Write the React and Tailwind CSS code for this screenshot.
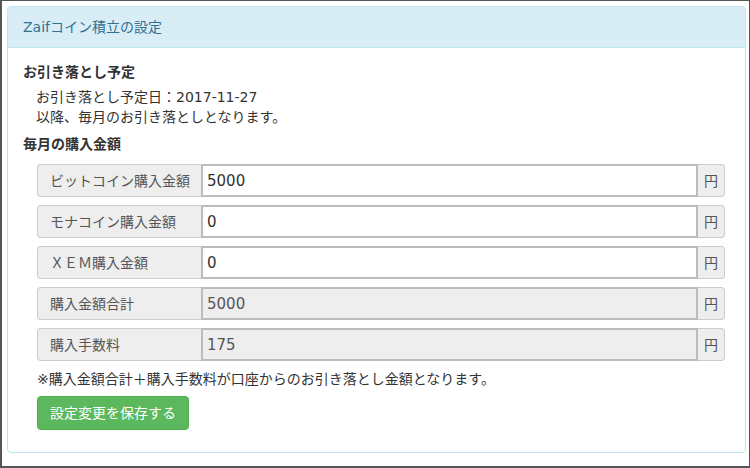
import React from "react";

const font = { fontFamily: '"DejaVu Sans", "Noto Sans CJK JP", sans-serif' };

const rows = [
  { label: "ビットコイン購入金額", value: "5000", readOnly: false },
  { label: "モナコイン購入金額", value: "0", readOnly: false },
  { label: "ＸＥＭ購入金額", value: "0", readOnly: false },
  { label: "購入金額合計", value: "5000", readOnly: true },
  { label: "購入手数料", value: "175", readOnly: true },
];

function AmountRow({ label, value, readOnly }) {
  return (
    <div className="flex h-[33px] mb-2 ml-[14px] mr-[5px]">
      <div className="w-[164px] shrink-0 flex items-center pl-[12px] bg-[#eeeeee] border border-[#cccccc] border-r-0 rounded-l-[4px] text-[14px] text-[#555555]">
        {label}
      </div>
      <input
        readOnly
        value={value}
        className={`flex-1 min-w-0 h-full pl-[4px] border-2 border-[#bcbcbc] outline-none text-[15px] ${
          readOnly ? "bg-[#eeeeee] text-[#555555]" : "bg-white text-[#333333]"
        }`}
        style={font}
      />
      <div className="w-[27px] shrink-0 flex items-center justify-center bg-[#eeeeee] border border-[#cccccc] border-l-0 rounded-r-[4px] text-[14px] text-[#555555]">
        円
      </div>
    </div>
  );
}

export default function App() {
  return (
    <div
      className="w-[750px] h-[468px] bg-white border-t border-l-2 border-r border-b-2 border-[#555555] pt-[5px] pl-[5px] pr-[3px] text-[#333333]"
      style={font}
    >
      <div className="border border-[#bce8f1] rounded-[4px]">
        <div className="bg-[#d9edf7] border-b border-[#bce8f1] rounded-t-[3px] px-[15px] py-[10px]">
          <h3 className="text-[14px] leading-[20px] text-[#31708f]">Zaifコイン積立の設定</h3>
        </div>
        <div className="px-[15px] pt-[14px] pb-[22px] text-[14px] leading-[20px]">
          <h4 className="font-bold mb-[5px]">お引き落とし予定</h4>
          <div className="ml-[13px]">
            <p>お引き落とし予定日：2017-11-27</p>
            <p>以降、毎月のお引き落としとなります。</p>
          </div>
          <h4 className="font-bold mt-[7px] mb-[10px]">毎月の購入金額</h4>
          {rows.map((r) => (
            <AmountRow key={r.label} {...r} />
          ))}
          <p className="ml-[14px] mt-[7px]">
            ※購入金額合計＋購入手数料が口座からのお引き落とし金額となります。
          </p>
          <button className="ml-[14px] mt-[7px] px-[12px] py-[6px] bg-[#5cb85c] border border-[#4cae4c] rounded-[4px] text-white text-[14px] leading-[20px]">
            設定変更を保存する
          </button>
        </div>
      </div>
    </div>
  );
}
